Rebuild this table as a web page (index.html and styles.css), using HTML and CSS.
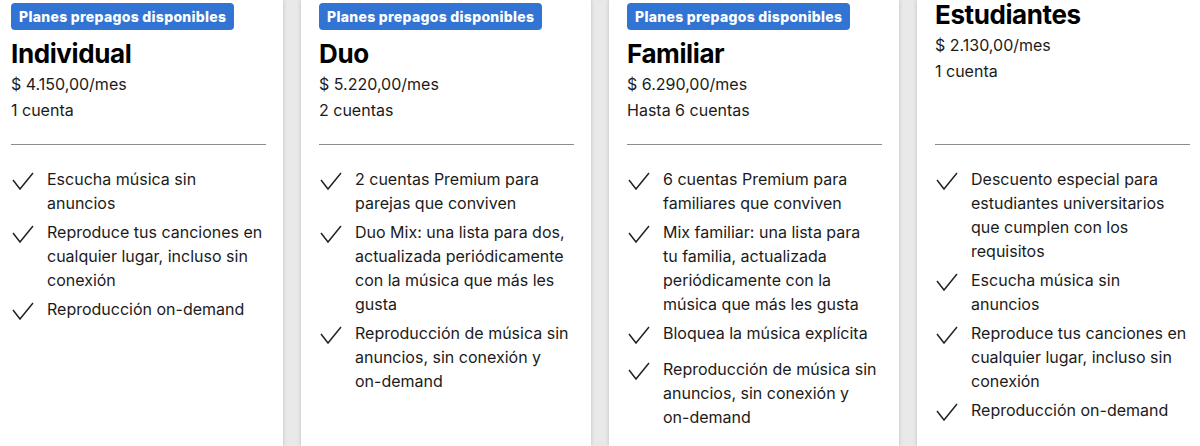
FILE: index.html
```html
<!DOCTYPE html>
<html lang="es">
<head>
<meta charset="utf-8">
<title>Planes</title>
<link rel="stylesheet" href="styles.css">
</head>
<body>
<div class="plans">
  <section class="card">
    <div class="card-head">
      <span class="badge">Planes prepagos disponibles</span>
      <h2 class="title">Individual</h2>
      <p class="price">$ 4.150,00/mes</p>
      <p class="accounts">1 cuenta</p>
    </div>
    <ul class="features">
      <li><svg class="check" viewBox="0 0 24 24"><path d="M2 13 L9 22 L22 6"/></svg><span>Escucha música sin anuncios</span></li>
      <li><svg class="check" viewBox="0 0 24 24"><path d="M2 13 L9 22 L22 6"/></svg><span>Reproduce tus canciones en cualquier lugar, incluso sin conexión</span></li>
      <li><svg class="check" viewBox="0 0 24 24"><path d="M2 13 L9 22 L22 6"/></svg><span>Reproducción <span class="nw">on-demand</span></span></li>
    </ul>
  </section>
  <section class="card">
    <div class="card-head">
      <span class="badge">Planes prepagos disponibles</span>
      <h2 class="title">Duo</h2>
      <p class="price">$ 5.220,00/mes</p>
      <p class="accounts">2 cuentas</p>
    </div>
    <ul class="features">
      <li><svg class="check" viewBox="0 0 24 24"><path d="M2 13 L9 22 L22 6"/></svg><span>2 cuentas Premium para parejas que conviven</span></li>
      <li><svg class="check" viewBox="0 0 24 24"><path d="M2 13 L9 22 L22 6"/></svg><span>Duo Mix: una lista para dos, actualizada periódicamente con la música que más les gusta</span></li>
      <li><svg class="check" viewBox="0 0 24 24"><path d="M2 13 L9 22 L22 6"/></svg><span>Reproducción de música sin anuncios, sin conexión y <span class="nw">on-demand</span></span></li>
    </ul>
  </section>
  <section class="card">
    <div class="card-head">
      <span class="badge">Planes prepagos disponibles</span>
      <h2 class="title">Familiar</h2>
      <p class="price">$ 6.290,00/mes</p>
      <p class="accounts">Hasta 6 cuentas</p>
    </div>
    <ul class="features">
      <li><svg class="check" viewBox="0 0 24 24"><path d="M2 13 L9 22 L22 6"/></svg><span>6 cuentas Premium para familiares que conviven</span></li>
      <li><svg class="check" viewBox="0 0 24 24"><path d="M2 13 L9 22 L22 6"/></svg><span>Mix familiar: una lista para tu&nbsp;familia, actualizada periódicamente con la música que más les gusta</span></li>
      <li><svg class="check" viewBox="0 0 24 24"><path d="M2 13 L9 22 L22 6"/></svg><span>Bloquea la música explícita</span></li>
      <li><svg class="check" viewBox="0 0 24 24"><path d="M2 13 L9 22 L22 6"/></svg><span>Reproducción de música sin anuncios, sin conexión y <span class="nw">on-demand</span></span></li>
    </ul>
  </section>
  <section class="card">
    <div class="card-head">
      <h2 class="title title-top">Estudiantes</h2>
      <p class="price">$ 2.130,00/mes</p>
      <p class="accounts">1 cuenta</p>
    </div>
    <ul class="features">
      <li><svg class="check" viewBox="0 0 24 24"><path d="M2 13 L9 22 L22 6"/></svg><span>Descuento especial para estudiantes universitarios que cumplen con los requisitos</span></li>
      <li><svg class="check" viewBox="0 0 24 24"><path d="M2 13 L9 22 L22 6"/></svg><span>Escucha música sin anuncios</span></li>
      <li><svg class="check" viewBox="0 0 24 24"><path d="M2 13 L9 22 L22 6"/></svg><span>Reproduce tus canciones en cualquier lugar, incluso sin conexión</span></li>
      <li><svg class="check" viewBox="0 0 24 24"><path d="M2 13 L9 22 L22 6"/></svg><span>Reproducción <span class="nw">on-demand</span></span></li>
    </ul>
  </section>
</div>
</body>
</html>
```

FILE: styles.css
```css
* { box-sizing: border-box; }

html, body {
  margin: 0;
  padding: 0;
  height: 100%;
  overflow: hidden;
}

body {
  background: #e9e9e9;
  font-family: Inter, "Liberation Sans", sans-serif;
  color: #1b1b1b;
}

.plans {
  display: flex;
  gap: 18px;
  margin-left: -7px;
  align-items: stretch;
  min-height: 100%;
}

.card {
  flex: 0 0 290px;
  width: 290px;
  background: #fff;
  padding: 3px 17px 0 18px;
  box-shadow: 0 0 4px rgba(0, 0, 0, 0.18);
  min-height: 446px;
}

.card-head {
  display: flex;
  flex-direction: column;
  align-items: flex-start;
  height: 142px;
  border-bottom: 1px solid #8c8c8c;
}

.badge {
  display: inline-block;
  height: 27px;
  line-height: 27px;
  padding: 0 8px;
  border-radius: 4px;
  background: #3174d4;
  color: #fff;
  font-size: 14px;
  font-weight: 800;
  letter-spacing: 0.3px;
}

.title {
  margin: 8px 0 0;
  font-size: 26px;
  line-height: 32px;
  font-weight: 700;
  letter-spacing: -0.4px;
  color: #000;
}

.title-top {
  margin-top: -4px;
}

.price,
.accounts {
  margin: 2px 0 0;
  font-size: 16px;
  line-height: 24px;
}

.features {
  list-style: none;
  margin: 0;
  padding: 22px 0 0;
  display: flex;
  flex-direction: column;
  gap: 5px;
}

.features li {
  display: flex;
  gap: 12px;
  min-height: 31px;
  font-size: 16px;
  line-height: 24px;
}

.nw {
  white-space: nowrap;
}

.check {
  flex: 0 0 24px;
  width: 24px;
  height: 24px;
}

.check path {
  fill: none;
  stroke: #222;
  stroke-width: 1.5;
}
```
